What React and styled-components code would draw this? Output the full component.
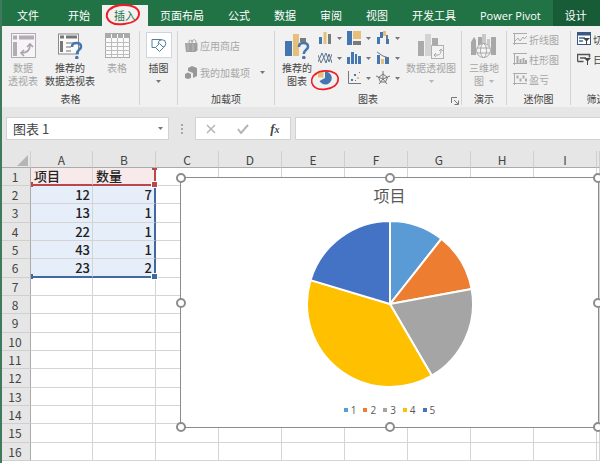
import React, { useState } from "react";
import styled, { createGlobalStyle } from "styled-components";

const colors = {
  green: "#217346",
  greenDark: "#185c37",
  ribbon: "#f1f1f1",
  chrome: "#e6e6e6",
  line: "#d4d4d4",
  text: "#444444",
  muted: "#a6a6a6",
  blue: "#4477b0",
  sand: "#e5c07a",
  gray: "#7a7a7a",
  rangeRed: "#b9474c",
  rangeBlue: "#41699f",
  marker: "#ee1c25",
};

const GlobalStyle = createGlobalStyle`
  * {
    box-sizing: border-box;
  }
  body {
    margin: 0;
    overflow: hidden;
    background: #fff;
    color: ${colors.text};
    font-family: "Open Sans", "Noto Sans CJK SC", sans-serif;
  }
  button, input {
    font: inherit;
    color: inherit;
    margin: 0;
    padding: 0;
    border: 0;
    background: none;
  }
  svg {
    display: block;
  }
`;

const Window = styled.div`
  border-left: 2px solid #3f7a5c;
  min-height: 100vh;
  display: flex;
  flex-direction: column;
`;

/* ---------- tabs ---------- */

const TabBar = styled.nav`
  display: flex;
  align-items: flex-end;
  height: 26px;
  background: ${colors.green};
  overflow: hidden;
`;

const Tab = styled.button`
  position: relative;
  flex: none;
  height: 21px;
  padding: 0 12px;
  font-size: 11px;
  line-height: 20px;
  white-space: nowrap;
  color: ${(p) => (p.$active ? colors.green : "#fff")};
  background: ${(p) => (p.$active ? colors.ribbon : "transparent")};
`;

const FileTab = styled(Tab)`
  padding: 0 15px;
  margin-right: 2px;
`;

const ContextTab = styled(Tab)`
  flex: 1 0 auto;
  height: 26px;
  padding-top: 5px;
  text-align: left;
  background: ${colors.greenDark};
`;

const Ring = styled.svg`
  position: absolute;
  left: ${(p) => p.$left}px;
  top: ${(p) => p.$top}px;
  z-index: 2;
  overflow: visible;
  pointer-events: none;
`;

/* ---------- ribbon ---------- */

const Ribbon = styled.div`
  display: flex;
  height: 81px;
  padding: 5px 0 2px;
  background: ${colors.ribbon};
  overflow: hidden;
`;

const Group = styled.section`
  position: relative;
  flex: 0 0 ${(p) => p.$width}px;
  display: flex;
  flex-direction: column;
  border-right: 1px solid ${colors.line};
`;

const GroupBody = styled.div`
  flex: 1;
  display: flex;
  padding: 0 ${(p) => p.$pad || 0}px;
`;

const GroupLabel = styled.div`
  height: 14px;
  margin-bottom: -1px;
  font-size: 10px;
  line-height: 14px;
  text-align: center;
  white-space: nowrap;
`;

const Launcher = styled.button`
  position: absolute;
  right: 2px;
  bottom: 0;
`;

const BigButton = styled.button`
  flex: 0 0 ${(p) => p.$width}px;
  display: flex;
  flex-direction: column;
  align-items: center;
  height: 58px;
  padding-top: 2px;
  font-size: 10px;
  line-height: 13px;
  white-space: nowrap;
  color: ${(p) => (p.disabled ? colors.muted : colors.text)};

  > svg:first-child {
    margin-bottom: 3px;
    flex: none;
  }
`;

const ButtonLine = styled.span`
  display: flex;
  align-items: center;
  gap: 5px;
  min-height: 13px;
`;

const PictureTile = styled.span`
  width: 26px;
  height: 26px;
  margin: -1px 0 4px;
  flex: none;
  display: grid;
  place-items: center;
  border: 1px solid #cdd6dc;
  background: #fff;
`;

const List = styled.div`
  display: flex;
  flex-direction: column;
  gap: ${(p) => p.$gap || 4}px;
  padding-top: ${(p) => p.$top || 0}px;
`;

const ListButton = styled.button`
  display: flex;
  align-items: center;
  justify-content: flex-start;
  gap: 2px;
  height: 16px;
  font-size: 10px;
  white-space: nowrap;
  color: ${(p) => (p.disabled ? colors.muted : colors.text)};

  > svg {
    flex: none;
  }
  > svg + svg {
    margin-left: 8px;
  }
`;

const ChartGrid = styled.div`
  display: grid;
  grid-template-columns: repeat(3, 29px);
  grid-auto-rows: 14px;
  row-gap: 6px;
`;

const ChartButton = styled.button`
  position: relative;
  display: flex;
  align-items: center;
  justify-content: flex-start;
  gap: 5px;
  padding-left: 1px;
`;

/* ---------- formula bar ---------- */

const FormulaBar = styled.div`
  display: flex;
  height: 44px;
  padding: 10px 0 11px 4px;
  background: ${colors.chrome};
`;

const Field = styled.div`
  display: flex;
  align-items: center;
  background: #fff;
  border: 1px solid #d2d2d2;
`;

const NameBox = styled(Field)`
  flex: 0 0 89px;
  padding: 0 5px 0 6px;

  input {
    flex: 1;
    min-width: 0;
    font-size: 13px;
    font-family: "Noto Sans CJK SC", sans-serif;
  }
`;

const Dots = styled.span`
  flex: 0 0 26px;
  display: flex;
  flex-direction: column;
  align-items: center;
  justify-content: center;
  gap: 2px;

  i {
    width: 2px;
    height: 2px;
    background: #a8a8a8;
  }
`;

const FormulaActions = styled(Field)`
  flex: 0 0 96px;
  justify-content: space-around;
  margin-right: 4px;
`;

const FxButton = styled.button`
  font: italic bold 13px "Liberation Serif", serif;

  small {
    font-size: 10px;
  }
`;

const FormulaInput = styled.input`
  flex: 1;
  min-width: 0;
  background: #fff;
  border: 1px solid #d2d2d2;
  border-right: 0;
  padding: 0 6px;
  font-size: 13px;
`;

/* ---------- sheet ---------- */

const Sheet = styled.main`
  position: relative;
`;

const Grid = styled.table`
  width: 100%;
  table-layout: fixed;
  border-collapse: separate;
  border-spacing: 0;
  font-family: "Noto Sans CJK SC", sans-serif;

  tbody tr {
    height: 18px;
  }
  tbody tr:nth-child(3n) {
    height: 19px;
  }
`;

const ColumnHead = styled.th`
  height: 17px;
  padding: 2px 0 0;
  font-size: 12px;
  line-height: 14px;
  font-weight: 400;
  background: ${colors.chrome};
  border-right: 1px solid #cfcfcf;
  border-bottom: 1px solid #ababab;
`;

const Corner = styled(ColumnHead)`
  svg {
    margin-left: auto;
    margin-right: 2px;
  }
`;

const RowHead = styled.th`
  padding: 0 2px 0 0;
  font-size: 12px;
  line-height: 16px;
  font-weight: 400;
  background: ${colors.chrome};
  border-right: 1px solid #ababab;
  border-bottom: 1px solid #cfcfcf;
`;

const Cell = styled.td`
  padding: 0;
  line-height: 16px;
  border-right: 1px solid ${colors.line};
  border-bottom: 1px solid ${colors.line};
`;

const TitleCell = styled(Cell)`
  position: relative;
  padding: 0 3px;
  font-size: 13px;
  font-weight: 500;
  color: #222;
  background: #f8eaea;
  border-bottom: 2px solid ${colors.rangeRed};
  ${(p) => p.$last && `border-right: 2px solid ${colors.rangeRed};`}
`;

const ValueCell = styled(Cell)`
  position: relative;
  padding: 0 2px;
  font-size: 13px;
  font-weight: 500;
  text-align: right;
  color: #222;
  background: #e6eef9;
  ${(p) => p.$last && `border-right: 2px solid ${colors.rangeBlue};`}
  ${(p) => p.$bottom && `border-bottom: 2px solid ${colors.rangeBlue};`}
`;

const RangeHandle = styled.span`
  position: absolute;
  z-index: 1;
  width: ${(p) => (p.$left ? 2 : 5)}px;
  height: ${(p) => (p.$top ? 2 : 5)}px;
  right: ${(p) => (p.$left ? "auto" : "-3px")};
  left: ${(p) => (p.$left ? "0" : "auto")};
  ${(p) => (p.$top ? "top: 0" : "bottom: -3px")};
  background: ${(p) => p.$color};
  outline: ${(p) => (p.$left || p.$top ? "none" : "1px solid #fff")};
`;

/* ---------- chart ---------- */

const ChartFrame = styled.figure`
  position: absolute;
  left: 178px;
  right: 1px;
  top: 26px;
  height: 251px;
  margin: 0;
  display: flex;
  flex-direction: column;
  align-items: center;
  background: #fff;
  border: 1px solid #8c8c8c;
`;

const ChartTitle = styled.figcaption`
  margin: 6px 0 12px;
  font-size: 16px;
  line-height: 24px;
  color: #595959;
`;

const Legend = styled.ul`
  display: flex;
  gap: 7px;
  margin: 15px 0 0;
  padding: 0;
  list-style: none;
  font-size: 10px;
  line-height: 14px;
  color: #595959;
`;

const LegendItem = styled.li`
  display: flex;
  align-items: center;
  gap: 3px;

  &::before {
    content: "";
    width: 4px;
    height: 4px;
    background: ${(p) => p.$color};
  }
`;

const Handle = styled.span`
  position: absolute;
  left: ${(p) => p.$x};
  top: ${(p) => p.$y};
  width: 10px;
  height: 10px;
  margin: -5px 0 0 -5px;
  border: 2px solid #8c8c8c;
  border-radius: 50%;
  background: #fff;
`;

/* ---------- icons ---------- */

const Arrow = ({ color = "#777" }) => (
  <svg width="5" height="3" viewBox="0 0 5 3">
    <path d="M0 0h5L2.5 3z" fill={color} />
  </svg>
);

const PivotIcon = () => (
  <svg width="25" height="26" viewBox="0 0 25 26" fill="none" stroke="#b3adb3">
    <rect x="0.5" y="0.5" width="24" height="24" fill="#f6f4f6" />
    <path d="M2 4.5h4M8 4.5h15" strokeWidth="4" />
    <path d="M4 9v14" strokeWidth="4" />
    <path d="M10 20c6 0 9-3 9-8M16 14l3-3 3 3M13 17l-3 3 3 3" stroke="#a9a3a9" strokeWidth="1.6" />
  </svg>
);

const QuestionMark = ({ x, y }) => (
  <g transform={`translate(${x} ${y})`} fill="none" stroke={colors.blue}>
    <path d="M1 5C1 1.8 3 1 5.5 1C8.5 1 10 2.7 10 4.7C10 8 5.8 7.5 5.8 12" strokeWidth="2.6" />
    <circle cx="5.8" cy="15.5" r="1.8" fill={colors.blue} stroke="none" />
  </g>
);

const RecommendPivotIcon = () => (
  <svg width="25" height="26" viewBox="0 0 25 26">
    <rect x="0.5" y="1" width="20" height="20" fill="#fafafa" stroke="#8a8a8a" />
    <path d="M2 4h4M8 4h11" stroke="#777" strokeWidth="3" />
    <path d="M3.5 8v11" stroke="#777" strokeWidth="3" />
    <path d="M8 10h9M8 14h5M8 18h5" stroke="#b5b5b5" strokeWidth="2" />
    <QuestionMark x={13} y={9} />
  </svg>
);

const TableIcon = () => (
  <svg width="25" height="26" viewBox="0 0 25 26" fill="none" stroke="#aaa">
    <rect x="0.5" y="0.5" width="24" height="24" fill="#fafafa" />
    <path d="M1 3h23" strokeWidth="4" strokeDasharray="5 1" />
    <path d="M0 9.5h25M0 13.5h25M0 17.5h25M0 21.5h25M6.5 5v20M12.5 5v20M18.5 5v20" stroke="#bdbdbd" />
  </svg>
);

const ShapesIcon = () => (
  <svg width="16" height="14" viewBox="0 0 16 14" fill="#fff" stroke="#4f7f9c">
    <path d="M1 1.5h9v8H1z" />
    <circle cx="11" cy="5.5" r="3.8" />
    <path d="M8.5 5.5l4 4-4 4-4-4z" />
  </svg>
);

const StoreIcon = () => (
  <svg width="13" height="13" viewBox="0 0 13 13" fill="#a0a0a0">
    <path d="M0 4h12.5v7.5L10 13H1z" />
    <path d="M4 4V2c0-1 3-1 3 0v2M7 3c0-3 4-3 4 0v2" fill="none" stroke="#a0a0a0" />
    <path d="M3 4v8M8 5v7" stroke="#bdbdbd" />
  </svg>
);

const AddinIcon = () => (
  <svg width="13" height="13" viewBox="0 0 13 13" fill="#989898">
    <path d="M7 0l5 2v8l-4 2V7L3 5V2z" />
    <path d="M0 8l3-1.5L6 8v4l-3 1-3-1z" />
  </svg>
);

const RecommendChartIcon = () => (
  <svg width="25" height="26" viewBox="0 0 25 26">
    <path d="M0 8h7v15H0z" fill={colors.blue} />
    <path d="M8 1h6v22H8z" fill={colors.sand} />
    <path d="M15 5h6v4h-6z" fill={colors.gray} />
    <QuestionMark x={13} y={9} />
  </svg>
);

const PivotChartIcon = () => (
  <svg width="26" height="26" viewBox="0 0 26 26">
    <path d="M0 8h6v15H0zM14 5h6v7h-6z" fill="#aaa" />
    <path d="M7 1h6v22H7z" fill="#d3d3d3" />
    <rect x="13.5" y="12.5" width="12" height="13" fill="#f3f3f3" stroke="#b0b0b0" />
    <path d="M16 22h4c2 0 3-2 3-5M21 18l2-2 2 2M18 20l-2 2 2 2" fill="none" stroke="#aaa" />
  </svg>
);

const MapIcon = () => (
  <svg width="26" height="26" viewBox="0 0 26 26">
    <path d="M0 9l3-5 2 3v15H0zM20 4h5v18h-5zM7 4h4v12H7z" fill="#a8a8a8" />
    <path d="M11 1h4v14h-4zM16 6h3v10h-3z" fill="#c8c8c8" />
    <g fill="#f4f4f4" stroke="#a8a8a8">
      <circle cx="12.5" cy="17.5" r="7" />
      <ellipse cx="12.5" cy="17.5" rx="3" ry="7" fill="none" />
      <path d="M6 15h13M6 20h13" />
    </g>
  </svg>
);

const SparkIcon = ({ kind }) => (
  <svg width="14" height="12" viewBox="0 0 14 12" fill="none" stroke="#ababab">
    <path d="M0 0.5h14M0 10.5h14M1.5 0v12" />
    {kind === "line" && <path d="M2 8l3-3 2 3 3-4 1.5 2L14 3" />}
    {kind === "column" && <path d="M4.5 10V3M7.5 10V6M10.5 10V5M13 10V7" strokeWidth="2" />}
    {kind === "winloss" && <path d="M4.5 2.5v3M7.5 5.5v3M10.5 2.5v3M13 5.5v3" strokeWidth="2" />}
  </svg>
);

const SlicerIcon = () => (
  <svg width="14" height="14" viewBox="0 0 14 14" fill="none" stroke="#3c5a80">
    <rect x="0.5" y="0.5" width="13" height="12" fill="#fff" />
    <path d="M1 2h12" strokeWidth="3" />
    <path d="M2 6h6M2 9h4" stroke="#6d8fba" strokeWidth="2" />
    <path d="M6 6h7l-3 3v4H9V9z" fill="#444" stroke="none" />
  </svg>
);

const TimelineIcon = () => (
  <svg width="14" height="12" viewBox="0 0 14 12" fill="none" stroke="#555">
    <path d="M0.5 8.5v-7h12v3M0.5 8.5h6M3 5h6" strokeWidth="1.5" />
    <path d="M7 5h7l-3 3v4h-1V8z" fill="#444" stroke="none" />
  </svg>
);

const chartIcons = {
  柱形图: (
    <>
      <path d="M1 6h3v7H1z" fill={colors.blue} />
      <path d="M5.5 1h3v12h-3z" fill={colors.sand} />
      <path d="M10 3h3v10h-3z" fill={colors.gray} />
    </>
  ),
  树状图: (
    <>
      <path d="M0 0h5v14H0z" fill={colors.blue} />
      <path d="M6 0h8v8H6z" fill={colors.sand} />
      <path d="M0 10h5v4H0z" fill={colors.blue} />
      <path d="M6 10h8v4H6z" fill={colors.gray} />
    </>
  ),
  瀑布图: (
    <>
      <path d="M1 6h3v7H1zM4 1h3v6H4zM10 8h3v5h-3z" fill={colors.blue} />
      <path d="M7 0h3v5H7z" fill={colors.sand} />
      <path d="M10 4h2v4h-2z" fill={colors.gray} />
    </>
  ),
  折线图: (
    <>
      <path d="M0 11L4 2l4 10 3-9 3 9" fill="none" stroke={colors.blue} />
      <path d="M0 4l3 8 5-10 3 9 3-8" fill="none" stroke="#777" />
    </>
  ),
  直方图: <path d="M0 6h3v7H0zM4 1h3v12H4zM8 3h2v10H8zM11 5h3v8h-3z" fill={colors.blue} />,
  组合图: (
    <>
      <path d="M1 4h3v9H1z" fill={colors.blue} />
      <path d="M5 8h3v5H5z" fill={colors.sand} />
      <path d="M9 6h4v7H9z" fill={colors.blue} />
      <path d="M1 1l6 4 6 2" fill="none" stroke="#777" />
    </>
  ),
  饼图: (
    <>
      <path d="M7 7V0.5A6.5 6.5 0 1 1 1.5 10z" fill={colors.blue} />
      <path d="M5.5 6.5H0V0h5.5z" fill={colors.sand} />
    </>
  ),
  散点图: (
    <>
      <path d="M1.5 0v12.5H14" fill="none" stroke="#777" />
      <path d="M4 8h2v2H4zM7 3h2v2H7z" fill={colors.blue} />
      <path d="M10 6h2v2h-2z" fill={colors.sand} />
      <path d="M12 1h1v1h-1zM8 9h1v1H8z" fill="#777" />
    </>
  ),
  雷达图: (
    <path
      d="M7 0v8M0 5l7 3 7-3M3 13l4-5 4 5M7 3L2.5 6.5 4.5 11h5l2-4.5z"
      fill="none"
      stroke="#777"
    />
  ),
};

const RedRing = ({ width, height, left, top }) => (
  <Ring $left={left} $top={top} width={width} height={height} viewBox="0 0 34 22" preserveAspectRatio="none">
    <path
      d="M10 2C3 4 0 9 1 14c2 6 9 8 17 7 9-1 15-5 15-11C33 4 26 1 18 1 13 1 8 2 5 5"
      fill="none"
      stroke={colors.marker}
      strokeWidth="2"
      strokeLinecap="round"
    />
  </Ring>
);

/* ---------- data ---------- */

const tabs = ["开始", "插入", "页面布局", "公式", "数据", "审阅", "视图", "开发工具", "Power Pivot"];
const columns = ["A", "B", "C", "D", "E", "F", "G", "H", "I"];
const rows = [
  [12, 7],
  [13, 1],
  [22, 1],
  [43, 1],
  [23, 2],
];
const sliceColors = ["#5b9bd5", "#ed7d31", "#a5a5a5", "#ffc000", "#4472c4"];

const PieChart = ({ values }) => {
  const total = values.reduce((sum, v) => sum + v, 0);
  const point = (v) => {
    const angle = (v / total) * Math.PI * 2;
    return `${84 + 83 * Math.sin(angle)} ${84 - 83 * Math.cos(angle)}`;
  };
  let start = 0;

  return (
    <svg width="168" height="168" viewBox="0 0 168 168">
      {values.map((value, index) => {
        const from = start;
        start += value;
        const large = value / total > 0.5 ? 1 : 0;
        return (
          <path
            key={index}
            d={`M84 84L${point(from)}A83 83 0 ${large} 1 ${point(start)}Z`}
            fill={sliceColors[index]}
            stroke="#fff"
            strokeWidth="2"
            strokeLinejoin="round"
          />
        );
      })}
    </svg>
  );
};

const RibbonPanel = () => (
  <Ribbon>
    <Group $width={138}>
      <GroupBody $pad={2}>
        <BigButton $width={38} disabled>
          <PivotIcon />
          <ButtonLine>数据</ButtonLine>
          <ButtonLine>透视表</ButtonLine>
        </BigButton>
        <BigButton $width={56}>
          <RecommendPivotIcon />
          <ButtonLine>推荐的</ButtonLine>
          <ButtonLine>数据透视表</ButtonLine>
        </BigButton>
        <BigButton $width={38} disabled>
          <TableIcon />
          <ButtonLine>表格</ButtonLine>
        </BigButton>
      </GroupBody>
      <GroupLabel>表格</GroupLabel>
    </Group>

    <Group $width={38}>
      <GroupBody>
        <BigButton $width={37}>
          <PictureTile>
            <ShapesIcon />
          </PictureTile>
          <ButtonLine>插图</ButtonLine>
          <ButtonLine>
            <Arrow />
          </ButtonLine>
        </BigButton>
      </GroupBody>
    </Group>

    <Group $width={97}>
      <GroupBody $pad={7}>
        <List $top={6} $gap={11}>
          <ListButton disabled>
            <StoreIcon />
            应用商店
          </ListButton>
          <ListButton disabled>
            <AddinIcon />
            我的加载项
            <Arrow />
          </ListButton>
        </List>
      </GroupBody>
      <GroupLabel>加载项</GroupLabel>
    </Group>

    <Group $width={187}>
      <GroupBody $pad={2}>
        <BigButton $width={40}>
          <RecommendChartIcon />
          <ButtonLine>推荐的</ButtonLine>
          <ButtonLine>图表</ButtonLine>
        </BigButton>
        <ChartGrid>
          {Object.entries(chartIcons).map(([name, shape]) => (
            <ChartButton key={name} aria-label={name}>
              <svg width="14" height="14" viewBox="0 0 14 14">
                {shape}
              </svg>
              {name === "饼图" ? (
                <RedRing left={-6} top={-1} width={28} height={20} />
              ) : (
                <Arrow />
              )}
            </ChartButton>
          ))}
        </ChartGrid>
        <BigButton $width={54} disabled>
          <PivotChartIcon />
          <ButtonLine>数据透视图</ButtonLine>
          <ButtonLine>
            <Arrow color="#b5b5b5" />
          </ButtonLine>
        </BigButton>
      </GroupBody>
      <GroupLabel>图表</GroupLabel>
      <Launcher aria-label="图表选项">
        <svg width="8" height="8" viewBox="0 0 8 8" fill="none" stroke="#777">
          <path d="M0.5 6V0.5H6M3 3l4 4M7.5 3.5v4h-4" />
        </svg>
      </Launcher>
    </Group>

    <Group $width={45}>
      <GroupBody>
        <BigButton $width={44} disabled>
          <MapIcon />
          <ButtonLine>三维地</ButtonLine>
          <ButtonLine>
            图
            <Arrow color="#b5b5b5" />
          </ButtonLine>
        </BigButton>
      </GroupBody>
      <GroupLabel>演示</GroupLabel>
    </Group>

    <Group $width={64}>
      <GroupBody $pad={6}>
        <List>
          <ListButton disabled>
            <SparkIcon kind="line" />
            折线图
          </ListButton>
          <ListButton disabled>
            <SparkIcon kind="column" />
            柱形图
          </ListButton>
          <ListButton disabled>
            <SparkIcon kind="winloss" />
            盈亏
          </ListButton>
        </List>
      </GroupBody>
      <GroupLabel>迷你图</GroupLabel>
    </Group>

    <Group $width={62}>
      <GroupBody $pad={6}>
        <List>
          <ListButton>
            <SlicerIcon />
            切片器
          </ListButton>
          <ListButton>
            <TimelineIcon />
            日程表
          </ListButton>
        </List>
      </GroupBody>
      <GroupLabel>筛选器</GroupLabel>
    </Group>
  </Ribbon>
);

const SheetRow = ({ number }) => {
  const values = rows[number - 2];
  const isBottom = number === rows.length + 1;

  return (
    <tr>
      <RowHead scope="row">{number}</RowHead>
      {number === 1 && (
        <>
          <TitleCell>
            项目
            <RangeHandle $left $color={colors.rangeRed} />
          </TitleCell>
          <TitleCell $last>
            数量
            <RangeHandle $top $color={colors.rangeRed} />
            <RangeHandle $color={colors.rangeRed} />
          </TitleCell>
        </>
      )}
      {values && (
        <>
          <ValueCell $bottom={isBottom}>
            {values[0]}
            {isBottom && <RangeHandle $left $color={colors.rangeBlue} />}
          </ValueCell>
          <ValueCell $last $bottom={isBottom}>
            {values[1]}
            {isBottom && <RangeHandle $color={colors.rangeBlue} />}
          </ValueCell>
        </>
      )}
      {number > rows.length + 1 && (
        <>
          <Cell />
          <Cell />
        </>
      )}
      {columns.slice(2).map((name) => (
        <Cell key={name} />
      ))}
      <Cell />
    </tr>
  );
};

const handles = [
  ["0%", "0%"],
  ["50%", "0%"],
  ["100%", "0%"],
  ["0%", "50%"],
  ["100%", "50%"],
  ["0%", "100%"],
  ["50%", "100%"],
  ["100%", "100%"],
];

const App = () => {
  const [activeTab, setActiveTab] = useState("插入");
  const [name, setName] = useState("图表 1");
  const [formula, setFormula] = useState("");

  return (
    <Window>
      <GlobalStyle />
      <TabBar>
        <FileTab>文件</FileTab>
        {tabs.map((tab) => (
          <Tab key={tab} $active={tab === activeTab} onClick={() => setActiveTab(tab)}>
            {tab}
            {tab === "插入" && <RedRing left={4} top={-1} width={34} height={21} />}
          </Tab>
        ))}
        <ContextTab>设计</ContextTab>
      </TabBar>

      <RibbonPanel />

      <FormulaBar>
        <NameBox>
          <input aria-label="名称框" value={name} onChange={(e) => setName(e.target.value)} />
          <button aria-label="展开名称">
            <Arrow />
          </button>
        </NameBox>
        <Dots>
          <i />
          <i />
          <i />
        </Dots>
        <FormulaActions>
          <button aria-label="取消">
            <svg width="10" height="10" viewBox="0 0 10 10" stroke="#b5b5b5" strokeWidth="1.5">
              <path d="M1 1l8 8M9 1L1 9" />
            </svg>
          </button>
          <button aria-label="输入">
            <svg width="12" height="10" viewBox="0 0 12 10" fill="none" stroke="#b5b5b5" strokeWidth="2">
              <path d="M1 5l3 4 7-8" />
            </svg>
          </button>
          <FxButton aria-label="插入函数">
            f<small>x</small>
          </FxButton>
        </FormulaActions>
        <FormulaInput aria-label="编辑栏" value={formula} onChange={(e) => setFormula(e.target.value)} />
      </FormulaBar>

      <Sheet>
        <Grid>
          <colgroup>
            <col style={{ width: 29 }} />
            {columns.map((column, index) => (
              <col key={column} style={{ width: index === 0 ? 62 : 63 }} />
            ))}
            <col />
          </colgroup>
          <thead>
            <tr>
              <Corner>
                <svg width="11" height="11" viewBox="0 0 11 11">
                  <path d="M11 0v11H0z" fill="#b5b5b5" />
                </svg>
              </Corner>
              {columns.map((column) => (
                <ColumnHead key={column} scope="col">
                  {column}
                </ColumnHead>
              ))}
              <ColumnHead />
            </tr>
          </thead>
          <tbody>
            {Array.from({ length: 16 }, (_, index) => (
              <SheetRow key={index} number={index + 1} />
            ))}
          </tbody>
        </Grid>

        <ChartFrame>
          <ChartTitle>项目</ChartTitle>
          <PieChart values={rows.map((row) => row[0])} />
          <Legend>
            {sliceColors.map((color, index) => (
              <LegendItem key={color} $color={color}>
                {index + 1}
              </LegendItem>
            ))}
          </Legend>
          {handles.map(([x, y]) => (
            <Handle key={x + y} $x={x} $y={y} />
          ))}
        </ChartFrame>
      </Sheet>
    </Window>
  );
};

export default App;
